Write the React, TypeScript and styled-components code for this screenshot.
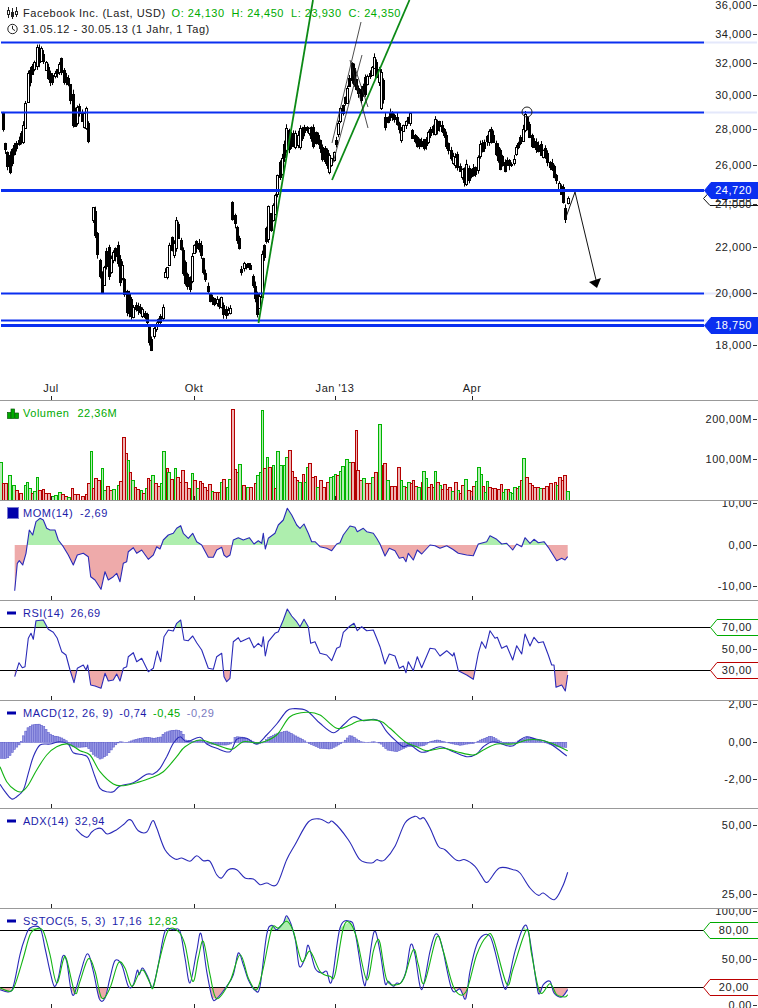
import React from "react";
import styled, { createGlobalStyle } from "styled-components";

type P = [number, number];

const GlobalStyle = createGlobalStyle`
  html, body { margin: 0; padding: 0; background: #fff; }
  body { font-family: "Liberation Sans", Arial, sans-serif; }
`;

const Page = styled.div`
  width: 758px;
  height: 1008px;
  overflow: hidden;
  display: flex;
  flex-direction: column;
  background: #fff;
  color: #222;
  font-size: 11px;
  letter-spacing: 0.52px;
`;

const Panel = styled.section<{ $h: number; $last?: boolean }>`
  flex: 0 0 ${(p) => p.$h}px;
  height: ${(p) => p.$h}px;
  box-sizing: border-box;
  display: grid;
  grid-template-columns: 704px 54px;
  grid-template-rows: 100%;
  overflow: hidden;
  border-bottom: ${(p) => (p.$last ? "none" : "1px solid #999")};
`;

const Plot = styled.svg`
  grid-area: 1 / 1 / 2 / 3;
  display: block;
  width: 758px;
  height: 100%;
`;

const Legend = styled.div<{ $top: number }>`
  grid-area: 1 / 1 / 2 / 2;
  align-self: start;
  padding: ${(p) => p.$top}px 0 0 7px;
  display: flex;
  flex-direction: column;
`;

const LegendRow = styled.div`
  display: flex;
  align-items: center;
  height: 16px;
  white-space: nowrap;
`;

const IconSlot = styled.svg`
  flex: 0 0 12px;
  width: 12px;
  height: 12px;
  margin-right: 4px;
  display: block;
`;

const Value = styled.span<{ $c: string; $gap?: number }>`
  color: ${(p) => p.$c};
  margin-right: ${(p) => p.$gap ?? 6}px;
`;

const AxisColumn = styled.div`
  grid-area: 1 / 2 / 2 / 3;
  position: relative;
`;

const AxisLabel = styled.div<{ $y: number }>`
  position: absolute;
  right: 0;
  top: ${(p) => p.$y - 7}px;
  height: 14px;
  line-height: 14px;
  padding-right: 6px;
  white-space: nowrap;
  &::after {
    content: "";
    position: absolute;
    right: 1px;
    top: 7px;
    width: 4px;
    height: 1px;
    background: #333;
  }
`;

const Flag = styled.div<{ $y: number; $w: number; $h: number }>`
  position: absolute;
  right: 0;
  top: ${(p) => p.$y - p.$h / 2}px;
  width: ${(p) => p.$w}px;
  height: ${(p) => p.$h}px;
`;

const FlagShape = styled.svg`
  position: absolute;
  inset: 0;
  width: 100%;
  height: 100%;
`;

const FlagText = styled.span<{ $c: string; $r: number }>`
  position: absolute;
  right: ${(p) => p.$r}px;
  top: 50%;
  transform: translateY(-50%);
  line-height: 14px;
  color: ${(p) => p.$c};
`;

const MonthLabel = styled.div<{ $x: number }>`
  position: absolute;
  left: ${(p) => p.$x}px;
  top: 381px;
  transform: translateX(-50%);
  line-height: 14px;
  white-space: nowrap;
`;

const TimeAxis = styled.div`
  grid-area: 1 / 1 / 2 / 2;
  position: relative;
`;

/* ---------- helpers ---------- */
const zoomed = (a: number[], ox: number, oy: number): P[] => {
  const r: P[] = [];
  for (let i = 0; i < a.length; i += 2) r.push([ox + a[i] / 3, oy + a[i + 1] / 3]);
  return r;
};
const str = (p: P[]) => p.map(([x, y]) => `${x.toFixed(1)},${y.toFixed(1)}`).join(" ");
const interp = (p: P[], x: number) => {
  if (x <= p[0][0]) return p[0][1];
  for (let i = 1; i < p.length; i++) {
    if (x <= p[i][0]) {
      const t = (x - p[i - 1][0]) / (p[i][0] - p[i - 1][0] || 1);
      return p[i - 1][1] + t * (p[i][1] - p[i - 1][1]);
    }
  }
  return p[p.length - 1][1];
};
const smoothPath = (p: P[]) => {
  let d = `M${p[0][0].toFixed(1)} ${p[0][1].toFixed(1)}`;
  for (let i = 0; i < p.length - 1; i++) {
    const a = p[Math.max(0, i - 1)];
    const b = p[i];
    const c = p[i + 1];
    const e = p[Math.min(p.length - 1, i + 2)];
    const c1: P = [b[0] + (c[0] - a[0]) / 6, b[1] + (c[1] - a[1]) / 6];
    const c2: P = [c[0] - (e[0] - b[0]) / 6, c[1] - (e[1] - b[1]) / 6];
    d += `C${c1[0].toFixed(1)} ${c1[1].toFixed(1)} ${c2[0].toFixed(1)} ${c2[1].toFixed(1)} ${c[0].toFixed(1)} ${c[1].toFixed(1)}`;
  }
  return d;
};

/* ---------- candles: [x, top, bottom, white] ---------- */
type K = [number, number, number, number];
const segments: K[][] = [
  [[2,102,115,1],[3,117,135,0],[5,143,150,0],[7,152,167,0],[10,155,173,0],[12,148,163,0],[15,143,150,0],[17,143,148,0],[20,135,143,0],[23,125,142,1],[26,95,122,1],[28,65,95,1],[31,65,78,0],[33,66,70,1],[36,47,67,1],[39,48,63,0],[42,48,60,1],[44,57,62,0],[47,65,78,0],[50,73,83,0],[53,75,82,0],[56,70,75,0],[58,68,72,1],[61,57,72,0],[64,72,85,0],[68,78,85,0],[72,87,125,0],[74,113,127,0],[77,107,123,1],[79,105,113,0],[83,115,127,1],[87,105,127,1],[89,133,150,0]],
  [[92,210,222,1],[94,203,218,0],[96,218,253,0],[99,257,273,0],[102,275,295,0],[104,267,285,1],[105,248,260,1],[108,242,277,0],[110,260,276,1],[113,252,260,1],[117,242,260,0],[120,260,285,0],[122,265,278,1],[125,283,300,0],[127,293,317,0],[130,295,317,0],[133,307,318,1],[135,305,310,0],[140,307,313,0],[143,310,317,1],[146,310,317,0],[149,327,343,0],[152,343,353,0],[153,329,338,1],[157,320,323,0],[160,317,323,0],[162,307,318,1]],
  [[165,272,277,1],[167,267,277,1],[169,247,267,1],[171,232,248,0],[173,250,257,1],[176,220,248,1],[179,225,235,0],[183,252,277,0],[186,267,287,0],[190,278,290,0],[192,253,280,1],[194,245,253,1],[197,240,248,0],[200,240,250,0],[203,258,273,0],[207,284,289,0],[210,295,303,0],[214,298,305,0],[218,300,307,0],[221,297,307,1],[224,308,318,0],[228,310,313,1],[231,307,313,1]],
  [[233,202,220,0],[236,220,235,0],[238,238,249,0]],
  [[240,267,275,1],[243,263,268,1],[247,263,266,0],[250,264,268,0],[252,273,283,0],[254,283,293,0],[257,293,315,0],[260,297,305,1],[262,239,293,1],[265,240,243,0],[268,205,240,1],[271,215,230,0],[274,198,222,1],[276,192,205,0],[278,165,187,1],[282,157,173,1],[286,128,150,1],[289,130,150,0],[292,133,147,0],[296,133,147,1],[300,128,147,1],[304,127,133,0],[310,127,135,0],[313,127,148,0],[318,135,143,0],[322,147,160,0],[326,148,163,0],[330,157,175,1],[333,155,163,1],[337,130,140,1],[341,103,117,1],[347,88,103,1],[351,62,80,0],[354,68,85,0],[357,85,93,0],[361,90,102,0],[364,78,100,0],[368,75,80,1],[371,70,77,1],[374,57,68,1],[377,63,80,0],[381,73,110,1],[383,80,100,0],[385,117,128,0],[390,112,118,0],[393,113,118,0],[397,117,125,0],[401,130,140,1],[404,123,128,1],[410,113,123,1],[413,135,143,0],[417,137,147,0],[423,140,150,0],[427,133,145,1],[430,130,137,0],[435,118,133,1],[438,122,130,0],[442,125,132,0],[446,135,147,0],[450,147,157,0],[452,157,163,1],[457,153,168,0],[460,168,172,0],[463,170,183,0],[467,162,183,1],[472,170,177,0],[477,160,173,1],[480,143,155,1],[483,143,150,0],[488,132,143,1],[492,128,140,0],[496,145,157,0],[500,150,170,0],[505,163,172,0],[508,160,167,0],[513,162,165,1],[515,148,155,1],[518,143,148,0],[522,132,143,1],[525,112,128,1],[529,123,137,0],[532,137,148,0],[537,143,150,0],[540,143,155,0],[545,148,157,0],[548,155,165,0],[552,163,170,0],[555,168,182,0],[558,182,187,1],[562,187,203,0]],
  [[565,208,220,0]],
  [[567,198,203,1]],
];

const Candles = () => {
  let seed = 12345;
  const rnd = () => ((seed = (seed * 1103515 + 12345) % 2147483648) / 2147483648);
  const nodes: React.ReactNode[] = [];
  for (let i = 0; i < 254; i++) {
    const x = 0.5 + i * 2.25;
    const seg = segments.find((s) => x >= s[0][0] - 1.2 && x <= s[s.length - 1][0] + 1.2);
    if (!seg) continue;
    const tops: P[] = seg.map((k) => [k[0], k[1]]);
    const bots: P[] = seg.map((k) => [k[0], k[2]]);
    const near = seg.reduce((a, b) => (Math.abs(b[0] - x) < Math.abs(a[0] - x) ? b : a));
    const d = Math.abs(near[0] - x);
    const jitter = d > 1.2 ? (rnd() - 0.5) * 4 : 0;
    const rawTop = interp(tops, x);
    const rawBot = Math.max(interp(bots, x), rawTop + 1.5);
    const size = rawBot - rawTop;
    const top = rawTop + jitter + (d > 1.2 ? rnd() * size * 0.3 : 0);
    const bot = rawBot + jitter - (d > 1.2 ? rnd() * size * 0.3 : 0);
    const white = d > 1.2 ? rnd() < 0.25 : !!near[3];
    const cx = Math.round(x);
    const up = rnd() * 4;
    const dn = rnd() * 4;
    const h = Math.max(2, Math.round(bot - top));
    nodes.push(
      <g key={i}>
        <line x1={cx + 0.5} x2={cx + 0.5} y1={top - up} y2={bot + dn} stroke="#000" strokeWidth={1} />
        {white ? (
          <rect x={cx - 0.5} y={Math.round(top) + 0.5} width={2} height={h} fill="#fff" stroke="#000" strokeWidth={1} />
        ) : (
          <rect x={cx - 1} y={Math.round(top)} width={3} height={h} fill="#000" />
        )}
      </g>
    );
  }
  return <>{nodes}</>;
};

/* ---------- series ---------- */
const volumeA = [-0.01,185,8,250,16,250,-28,225,-40,255,48,270,60,280,-75,255,-82,245,-88,265,96,280,-103,272,-110,232,118,270,128,268,135,280,145,278,-155,288,-165,286,-178,277,185,283,195,287,-205,290,215,265,222,282,232,283,245,287,258,283,265,248,-274,153,280,265,286,235,295,240,-306,205,-312,270,320,258,330,270,-340,268,-355,255,360,243,368,112,377,158,-384,180,390,217,-397,240,405,262,412,268,-422,270,430,280,-438,265,443,235,450,240,-457,225,465,250,473,258,-482,248,-490,153,500,205,-505,215,512,238,-525,205,532,232,540,245,547,210,555,245,565,265,-575,220,583,240,-590,265,600,243,607,250,612,262,620,270,628,253,-635,272,642,277,650,277,658,275,-662,247,670,238,-680,260,-688,238,697,28,704,208,712,215,-718,193,730,255,-740,262,750,260,765,250,-772,225,-780,215,-785,31,792,205,-800,172,806,200,-820,195,826,265,-832,153,-840,195,-852,195,-858,172,868,150,876,212,882,232,890,240,-898,245,908,222,-916,245,-920,200,928,190,936,232,944,228,-952,260,960,240,968,260,982,247,-990,232,-998,228,-1005,222,1012,225,-1020,212,-1025,197,-1037,178,-1047,185,1055,185,1067,90,1072,210,1080,240,-1090,235,1097,250,1107,250,-1115,230,1125,217,-1137,72];
const volumeB = [8,195,13,190,-22,240,33,258,42,257,55,200,-62,240,-70,257,77,262,-85,245,92,250,98,240,105,257,-115,262,125,247,-130,213,-138,235,145,262,152,253,160,260,-165,212,172,247,-180,255,186,268,192,253,200,268,207,262,-215,272,226,247,-233,270,240,280,247,255,-255,238,265,270,272,272,280,258,-287,243,-295,202,-302,222,308,257,-315,276,-322,244,328,262,335,265,343,265,350,268,355,268,362,253,-370,277,-375,268,383,268,-390,277,-397,280,-403,262,410,265,-416,258,423,240,-430,175,437,232,446,248,455,255,462,262,470,262,-480,265,490,265,498,257,510,250,525,247,-530,255,538,232,545,240,553,225,-562,273];

const VolumeBars = () => {
  const bars: { x: number; y: number; g: boolean }[] = [];
  for (let i = 0; i < volumeA.length; i += 2)
    bars.push({ x: Math.abs(volumeA[i]) / 3, y: 400 + volumeA[i + 1] / 3, g: volumeA[i] < 0 });
  for (let i = 0; i < volumeB.length; i += 2)
    bars.push({ x: 380 + Math.abs(volumeB[i]) / 3, y: 400 + volumeB[i + 1] / 3, g: volumeB[i] < 0 });
  return (
    <>
      {bars.map((b, i) => {
        const left = Math.round(b.x) - 1;
        const next = i < bars.length - 1 ? Math.round(bars[i + 1].x) - 1 : left + 3;
        const w = Math.max(2, Math.min(3, next - left));
        return (
          <rect
            key={i}
            x={left + 0.5}
            y={Math.round(b.y) + 0.5}
            width={w}
            height={Math.max(0, 500 - Math.round(b.y))}
            fill={b.g ? "#b4eeb4" : "#efb4b4"}
            stroke={b.g ? "#00b400" : "#b40000"}
            strokeWidth={1}
          />
        );
      })}
    </>
  );
};

const mom = [...zoomed([44,572,52,490,58,482,68,495,78,460,88,390,98,405,108,365,120,355,130,360,140,385,150,390,165,390,175,420,190,440,205,465,220,495,232,465,250,460,265,470,272,530,285,540,303,568,315,515,325,540,340,530,350,520,360,545,370,490,380,485,385,455,400,443,410,460,425,450,445,478,460,465,470,440,480,447,490,420,505,405,520,400,530,385,542,377,550,400,565,415,578,400,590,425,605,435,625,472,640,472,650,450,665,442,672,465,680,472,690,465,700,420,715,413,730,420,748,413,762,432,775,422,785,430,790,400,796,447,805,415,825,400,835,375,850,360,862,325,875,345,890,375,900,385,912,372,925,400,935,425,945,425,960,440,980,445,995,452,1010,432,1020,428,1030,405,1050,378,1065,382,1072,395,1090,385,1100,395,1120,400,1130,415,1140,432], 0, 400), ...zoomed([15,468,28,445,45,452,58,475,70,472,78,485,85,460,100,480,112,450,125,462,150,435,165,437,180,445,200,437,218,448,235,460,260,465,280,467,295,432,320,425,330,407,350,418,365,432,380,430,398,450,410,432,425,440,435,413,450,430,462,418,475,428,492,425,505,442,515,458,530,482,545,475,555,480,563,470], 380, 400)];

const rsi = [...zoomed([44,230,57,188,67,203,75,200,85,115,93,100,100,118,108,62,130,60,145,88,160,97,172,115,185,155,198,165,210,210,222,248,232,205,250,195,258,210,263,195,272,255,285,258,303,265,315,220,325,243,340,240,350,222,360,243,370,205,380,200,385,170,400,158,410,185,425,175,445,215,460,205,472,153,482,185,492,110,505,90,520,93,530,70,542,60,552,120,565,122,578,108,590,128,605,150,625,205,640,208,650,170,665,160,672,230,680,245,690,235,700,125,715,113,722,125,748,113,762,143,775,130,785,140,790,110,796,168,805,125,825,100,835,95,850,60,862,27,875,48,890,65,900,80,912,58,925,80,932,130,945,125,960,160,980,165,995,182,1010,145,1020,140,1030,97,1050,78,1062,70,1072,92,1085,80,1100,92,1120,90,1130,115,1140,140], 0, 600), ...zoomed([15,192,28,162,45,168,58,205,70,198,78,218,85,185,100,212,112,170,125,203,150,145,165,147,180,168,200,152,218,168,222,158,235,212,260,225,280,238,295,160,305,125,317,145,330,92,345,115,352,112,365,145,380,137,398,180,410,137,425,162,435,102,450,138,462,112,475,128,490,125,505,165,515,195,522,195,528,262,545,255,556,273,563,225], 380, 600)];

const macdBlue = [...zoomed([0,553,15,575,35,597,50,590,70,570,85,520,100,470,120,435,150,432,180,425,205,433,220,458,250,465,265,475,285,530,300,565,320,575,340,575,360,558,400,548,440,523,460,522,480,505,500,470,520,430,540,410,560,425,600,412,620,432,650,445,690,455,710,418,740,415,770,432,800,405,830,372,860,333,880,326,920,332,960,370,1000,398,1030,375,1060,350,1090,362,1120,358,1140,365], 0, 600), ...zoomed([20,395,50,425,70,440,90,435,120,455,140,455,180,440,220,455,260,470,290,462,310,440,340,425,380,437,400,437,420,420,440,410,470,418,500,425,530,445,560,468], 380, 600)];
const macdGreen = [...zoomed([0,500,20,545,45,570,65,575,85,555,110,510,140,465,170,440,205,432,240,452,270,465,300,515,340,552,370,557,410,548,450,535,490,515,530,470,555,440,600,420,650,435,695,448,730,425,780,428,830,405,870,350,920,337,960,345,1010,385,1050,375,1080,362,1140,363], 0, 600), ...zoomed([30,385,75,425,110,440,140,452,190,445,230,455,280,465,310,450,350,432,400,432,440,420,480,420,520,432,563,452], 380, 600)];
const macdHist = [...zoomed([0,475,20,475,30,465,40,450,50,440,60,430,70,405,80,385,95,375,115,372,130,380,145,400,160,408,180,412,195,420,215,440,235,442,260,440,280,465,300,478,320,465,340,440,350,430,360,425,380,428,400,420,420,415,440,412,460,415,480,412,490,400,510,392,530,390,545,395,555,420,580,425,600,420,620,430,650,435,680,435,695,430,705,410,730,412,750,420,770,433,790,427,805,412,830,400,860,393,880,405,900,415,925,430,960,445,990,447,1010,437,1030,425,1050,405,1065,415,1080,425,1100,428,1120,425,1140,430], 0, 600), ...zoomed([20,450,50,455,80,440,100,440,130,437,150,425,170,420,190,425,210,430,240,436,260,432,280,430,300,420,330,408,350,418,370,432,400,430,420,420,440,412,470,420,500,430,530,440,563,443], 380, 600)];

const adx = [...zoomed([228,63,245,80,262,88,275,72,290,62,305,62,322,78,350,65,370,50,385,36,395,38,415,68,440,72,458,38,470,60,495,125,525,153,545,150,570,160,590,143,610,158,630,160,650,200,665,210,685,185,710,185,735,210,760,213,780,230,800,225,830,230,860,155,885,110,925,42,960,33,985,45,1000,42,1045,95,1080,155,1115,165,1130,155,1140,158], 0, 808), ...zoomed([15,155,45,115,75,45,105,25,120,33,132,30,150,60,175,115,195,125,230,157,255,155,285,175,305,205,322,223,358,180,400,185,420,195,450,240,475,262,490,255,523,275,548,235,563,193], 380, 808)];

const stocBlue = [...zoomed([0,545,25,552,40,535,60,440,75,390,90,360,120,360,135,420,150,490,163,535,175,510,188,445,200,460,212,540,222,560,240,500,262,437,280,490,298,572,315,570,330,510,345,458,365,470,385,535,400,530,412,487,418,500,428,480,445,510,458,538,475,470,495,370,520,365,540,370,555,450,570,525,590,430,603,377,620,490,637,570,650,572,680,535,700,500,715,435,730,470,745,515,765,547,780,535,800,380,815,352,830,365,850,345,862,325,885,390,898,475,915,450,925,412,945,480,965,495,980,490,995,520,1020,360,1050,340,1065,370,1090,520,1100,510,1122,372,1140,430], 0, 808), ...zoomed([15,525,25,520,40,535,50,525,62,525,78,490,92,410,105,440,125,545,150,430,167,378,185,410,215,543,240,543,257,572,270,490,290,410,310,382,330,385,345,430,372,538,385,520,405,430,432,355,447,380,470,530,478,558,490,530,510,520,522,555,545,567,563,545], 380, 808)];
const stocGreen = [...zoomed([0,540,30,550,45,530,70,450,90,380,110,362,130,370,150,440,170,525,190,455,200,455,225,555,240,520,265,452,285,490,305,570,330,540,355,465,375,480,395,535,415,500,430,487,450,525,460,538,480,450,505,367,535,370,555,410,578,520,595,450,610,400,630,500,650,572,690,520,720,440,745,510,770,545,790,480,815,362,835,360,860,340,880,370,905,460,930,430,960,490,990,505,1005,500,1030,360,1050,345,1070,390,1100,515,1120,430,1130,400,1140,405], 0, 808), ...zoomed([20,515,50,530,72,510,100,425,115,470,133,525,170,388,190,430,222,540,257,553,290,440,320,385,340,392,380,528,400,480,440,365,455,440,480,553,510,527,530,560,555,567,563,560], 380, 808)];

const BLUE = "#2a2ab8";
const GREEN = "#14b414";
const LEGEND_BLUE = "#1c1caa";
const LEGEND_GREEN = "#00aa00";

const Line = ({ pts, c }: { pts: P[]; c: string }) => (
  <polyline points={str(pts)} fill="none" stroke={c} strokeWidth={1.1} strokeLinejoin="round" />
);
const Curve = ({ pts, c }: { pts: P[]; c: string }) => (
  <path d={smoothPath(pts)} fill="none" stroke={c} strokeWidth={1.1} />
);

const ThresholdFill = ({ id, pts, y, above, top, bottom }: { id: string; pts: P[]; y: number; above: boolean; top: number; bottom: number }) => (
  <>
    <clipPath id={id}>
      <rect x={0} y={above ? top : y} width={704} height={above ? y - top : bottom - y} />
    </clipPath>
    <polygon
      clipPath={`url(#${id})`}
      points={str([...pts, [pts[pts.length - 1][0], y], [pts[0][0], y]])}
      fill={above ? "#aeeeae" : "#eeaaaa"}
    />
  </>
);

const TimeTicks = ({ bottom }: { bottom: number }) => (
  <>
    {[51.5, 194.5, 335.5, 472.5].map((x) => (
      <line key={x} x1={x} x2={x} y1={bottom - 4} y2={bottom} stroke="#222" strokeWidth={1} />
    ))}
  </>
);

const Dash = () => (
  <IconSlot viewBox="0 0 12 12">
    <rect x={0} y={4.5} width={9} height={3} fill="#0000aa" />
  </IconSlot>
);

const Tick = ({ y, top, children }: { y: number; top: number; children: string }) => (
  <AxisLabel $y={y - top}>{children}</AxisLabel>
);

type FlagProps = { y: number; top: number; w?: number; h?: number; fill: string; stroke: string; text: string; c: string; r?: number };
const PriceFlag = ({ y, top, w = 54, h = 17, fill, stroke, text, c, r = 6 }: FlagProps) => (
  <Flag $y={y - top} $w={w} $h={h}>
    <FlagShape viewBox={`0 0 ${w} ${h}`}>
      <polygon
        points={`0.5,${h / 2} 7,0.5 ${w + 1},0.5 ${w + 1},${h - 0.5} 7,${h - 0.5}`}
        fill={fill}
        stroke={stroke}
        strokeWidth={1}
      />
    </FlagShape>
    <FlagText $c={c} $r={r}>{text}</FlagText>
  </Flag>
);

const BlueLevel = ({ y, w }: { y: number; w: number }) => (
  <>
    <line x1={704} x2={757} y1={y} y2={y} stroke="#e4e8fb" strokeWidth={2} />
    <line x1={1} x2={704} y1={y} y2={y} stroke="#0a2ff0" strokeWidth={w} />
  </>
);

export default function App() {
  return (
    <Page>
      <GlobalStyle />

      <Panel $h={401}>
        <Plot viewBox="0 0 758 400" height={400}>
          <Candles />
          <BlueLevel y={42.5} w={2} />
          <BlueLevel y={112.5} w={2} />
          <BlueLevel y={190.5} w={3} />
          <BlueLevel y={293.5} w={2} />
          <BlueLevel y={320.5} w={2} />
          <BlueLevel y={325.5} w={3} />
          <line x1={258.5} y1={323} x2={313} y2={0} stroke="#0c8a16" strokeWidth={1.8} />
          <line x1={332} y1={180} x2={409.5} y2={0} stroke="#0c8a16" strokeWidth={1.8} />
          <g stroke="#222" strokeWidth={0.8} fill="none">
            <line x1={332} y1={143} x2={361} y2={22} />
            <line x1={333} y1={163} x2={362} y2={55} />
            <line x1={350} y1={60} x2={368} y2={128} />
            <line x1={355} y1={68} x2={368} y2={107} />
            <circle cx={527} cy={112} r={5} strokeWidth={1} />
          </g>
          <polyline points="565,220 575,192 597,284" fill="none" stroke="#111" strokeWidth={1} />
          <polygon points="589,282 601,278 597,288" fill="#000" />
          <TimeTicks bottom={400} />
        </Plot>
        <Legend $top={5}>
          <LegendRow>
            <IconSlot viewBox="0 0 12 12">
              <g stroke="#222" strokeWidth={1} fill="#fff">
                <line x1={1.5} y1={0} x2={1.5} y2={11} />
                <rect x={0.5} y={3.5} width={2} height={4} />
                <line x1={5.5} y1={1} x2={5.5} y2={12} />
                <rect x={4.5} y={5.5} width={2} height={4} fill="#222" />
                <line x1={9.5} y1={0} x2={9.5} y2={10} />
                <rect x={8.5} y={4.5} width={2} height={3} />
              </g>
            </IconSlot>
            <Value $c="#222" $gap={6}>Facebook Inc. (Last, USD)</Value>
            <Value $c={LEGEND_GREEN} $gap={7}>O: 24,130</Value>
            <Value $c={LEGEND_GREEN} $gap={7}>H: 24,450</Value>
            <Value $c={LEGEND_GREEN} $gap={7}>L: 23,930</Value>
            <Value $c={LEGEND_GREEN} $gap={7}>C: 24,350</Value>
          </LegendRow>
          <LegendRow>
            <IconSlot viewBox="0 0 12 12">
              <circle cx={5.5} cy={6} r={4.7} fill="none" stroke="#222" strokeWidth={1} />
              <polyline points="5.5,2.8 5.5,6 8,7.6" fill="none" stroke="#222" strokeWidth={1} />
            </IconSlot>
            <Value $c="#222">31.05.12 - 30.05.13 (1 Jahr, 1 Tag)</Value>
          </LegendRow>
        </Legend>
        <TimeAxis>
          <MonthLabel $x={51}>Jul</MonthLabel>
          <MonthLabel $x={194}>Okt</MonthLabel>
          <MonthLabel $x={335}>Jan '13</MonthLabel>
          <MonthLabel $x={472}>Apr</MonthLabel>
        </TimeAxis>
        <AxisColumn>
          <Tick y={5} top={0}>36,000</Tick>
          <Tick y={34} top={0}>34,000</Tick>
          <Tick y={63} top={0}>32,000</Tick>
          <Tick y={95} top={0}>30,000</Tick>
          <Tick y={129} top={0}>28,000</Tick>
          <Tick y={165} top={0}>26,000</Tick>
          <PriceFlag y={198} top={0} h={15} w={55} fill="#fff" stroke="#111" text="24,350" c="#222" />
          <Tick y={204} top={0}>24,000</Tick>
          <PriceFlag y={190} top={0} fill="#0a2ff0" stroke="#0a2ff0" text="24,720" c="#fff" />
          <Tick y={247} top={0}>22,000</Tick>
          <Tick y={293} top={0}>20,000</Tick>
          <PriceFlag y={325} top={0} fill="#0a2ff0" stroke="#0a2ff0" text="18,750" c="#fff" />
          <Tick y={345} top={0}>18,000</Tick>
        </AxisColumn>
      </Panel>

      <Panel $h={100}>
        <Plot viewBox="0 401 758 99">
          <VolumeBars />
          <TimeTicks bottom={500} />
        </Plot>
        <Legend $top={4}>
          <LegendRow>
            <IconSlot viewBox="0 0 12 12">
              <g fill="#00aa00" stroke="#0a5a0a" strokeWidth={0.7}>
                <rect x={0.5} y={5.5} width={3.4} height={6} />
                <rect x={4} y={2} width={3.6} height={9.5} />
                <rect x={7.8} y={6} width={3.8} height={5.5} />
              </g>
            </IconSlot>
            <Value $c={LEGEND_GREEN} $gap={8}>Volumen</Value>
            <Value $c={LEGEND_GREEN}>22,36M</Value>
          </LegendRow>
        </Legend>
        <AxisColumn>
          <Tick y={419} top={401}>200,00M</Tick>
          <Tick y={459} top={401}>100,00M</Tick>
        </AxisColumn>
      </Panel>

      <Panel $h={100}>
        <Plot viewBox="0 501 758 99">
          <ThresholdFill id="mom-up" pts={mom} y={545} above top={501} bottom={600} />
          <ThresholdFill id="mom-dn" pts={mom} y={545} above={false} top={501} bottom={600} />
          <Line pts={mom} c={BLUE} />
          <TimeTicks bottom={600} />
        </Plot>
        <Legend $top={4}>
          <LegendRow>
            <IconSlot viewBox="0 0 12 12">
              <rect x={0.5} y={0.5} width={11} height={11} fill="#0000aa" stroke="#7a7ad0" strokeWidth={1} />
            </IconSlot>
            <Value $c={LEGEND_BLUE} $gap={7}>MOM(14)</Value>
            <Value $c={LEGEND_BLUE}>-2,69</Value>
          </LegendRow>
        </Legend>
        <AxisColumn>
          <Tick y={503} top={501}>10,00</Tick>
          <Tick y={545} top={501}>0,00</Tick>
          <Tick y={586} top={501}>-10,00</Tick>
        </AxisColumn>
      </Panel>

      <Panel $h={100}>
        <Plot viewBox="0 601 758 99">
          <ThresholdFill id="rsi-up" pts={rsi} y={627.5} above top={601} bottom={700} />
          <ThresholdFill id="rsi-dn" pts={rsi} y={670.5} above={false} top={601} bottom={700} />
          <line x1={0} x2={711} y1={627.5} y2={627.5} stroke="#000" strokeWidth={1} />
          <line x1={0} x2={711} y1={670.5} y2={670.5} stroke="#000" strokeWidth={1} />
          <Line pts={rsi} c={BLUE} />
          <TimeTicks bottom={700} />
        </Plot>
        <Legend $top={4}>
          <LegendRow>
            <Dash />
            <Value $c={LEGEND_BLUE}>RSI(14)</Value>
            <Value $c={LEGEND_BLUE}>26,69</Value>
          </LegendRow>
        </Legend>
        <AxisColumn>
          <PriceFlag y={627} top={601} w={48} fill="#fff" stroke="#00aa00" text="70,00" c="#222" />
          <Tick y={649} top={601}>50,00</Tick>
          <PriceFlag y={670} top={601} w={48} fill="#fff" stroke="#bb0000" text="30,00" c="#222" />
        </AxisColumn>
      </Panel>

      <Panel $h={108}>
        <Plot viewBox="0 701 758 107">
          {Array.from({ length: 252 }, (_, i) => {
            const x = 0.5 + i * 2.25;
            const v = interp(macdHist, x);
            const y0 = 742.3;
            return (
              <rect
                key={i}
                x={x - 0.5}
                y={Math.min(v, y0)}
                width={2}
                height={Math.abs(v - y0)}
                fill="#9a9ae4"
                stroke="#6060cc"
                strokeWidth={0.6}
              />
            );
          })}
          <Curve pts={macdBlue} c={BLUE} />
          <Curve pts={macdGreen} c={GREEN} />
          <TimeTicks bottom={808} />
        </Plot>
        <Legend $top={4}>
          <LegendRow>
            <Dash />
            <Value $c={LEGEND_BLUE}>MACD(12, 26, 9)</Value>
            <Value $c={LEGEND_BLUE}>-0,74</Value>
            <Value $c={LEGEND_GREEN}>-0,45</Value>
            <Value $c="#7a7abf">-0,29</Value>
          </LegendRow>
        </Legend>
        <AxisColumn>
          <Tick y={704} top={701}>2,00</Tick>
          <Tick y={742} top={701}>0,00</Tick>
          <Tick y={779} top={701}>-2,00</Tick>
        </AxisColumn>
      </Panel>

      <Panel $h={100}>
        <Plot viewBox="0 809 758 99">
          <Curve pts={adx} c={BLUE} />
          <TimeTicks bottom={908} />
        </Plot>
        <Legend $top={4}>
          <LegendRow>
            <Dash />
            <Value $c={LEGEND_BLUE}>ADX(14)</Value>
            <Value $c={LEGEND_BLUE}>32,94</Value>
          </LegendRow>
        </Legend>
        <AxisColumn>
          <Tick y={825} top={809}>50,00</Tick>
          <Tick y={894} top={809}>25,00</Tick>
        </AxisColumn>
      </Panel>

      <Panel $h={99} $last>
        <Plot viewBox="0 909 758 99">
          <ThresholdFill id="st-up" pts={stocBlue} y={930.5} above top={909} bottom={1008} />
          <ThresholdFill id="st-dn" pts={stocBlue} y={987.5} above={false} top={909} bottom={1008} />
          <line x1={0} x2={704} y1={930.5} y2={930.5} stroke="#000" strokeWidth={1} />
          <line x1={0} x2={704} y1={987.5} y2={987.5} stroke="#000" strokeWidth={1} />
          <Curve pts={stocBlue} c={BLUE} />
          <Curve pts={stocGreen} c={GREEN} />
          <TimeTicks bottom={1008} />
        </Plot>
        <Legend $top={4}>
          <LegendRow>
            <Dash />
            <Value $c={LEGEND_BLUE}>SSTOC(5, 5, 3)</Value>
            <Value $c={LEGEND_BLUE}>17,16</Value>
            <Value $c={LEGEND_GREEN}>12,83</Value>
          </LegendRow>
        </Legend>
        <AxisColumn>
          <Tick y={911} top={909}>100,00</Tick>
          <PriceFlag y={930} top={909} w={55} fill="#fff" stroke="#00aa00" text="80,00" c="#222" r={9} />
          <Tick y={959} top={909}>50,00</Tick>
          <PriceFlag y={987} top={909} w={55} fill="#fff" stroke="#bb0000" text="20,00" c="#222" r={9} />
          <Tick y={1005} top={909}>0,00</Tick>
        </AxisColumn>
      </Panel>
    </Page>
  );
}
